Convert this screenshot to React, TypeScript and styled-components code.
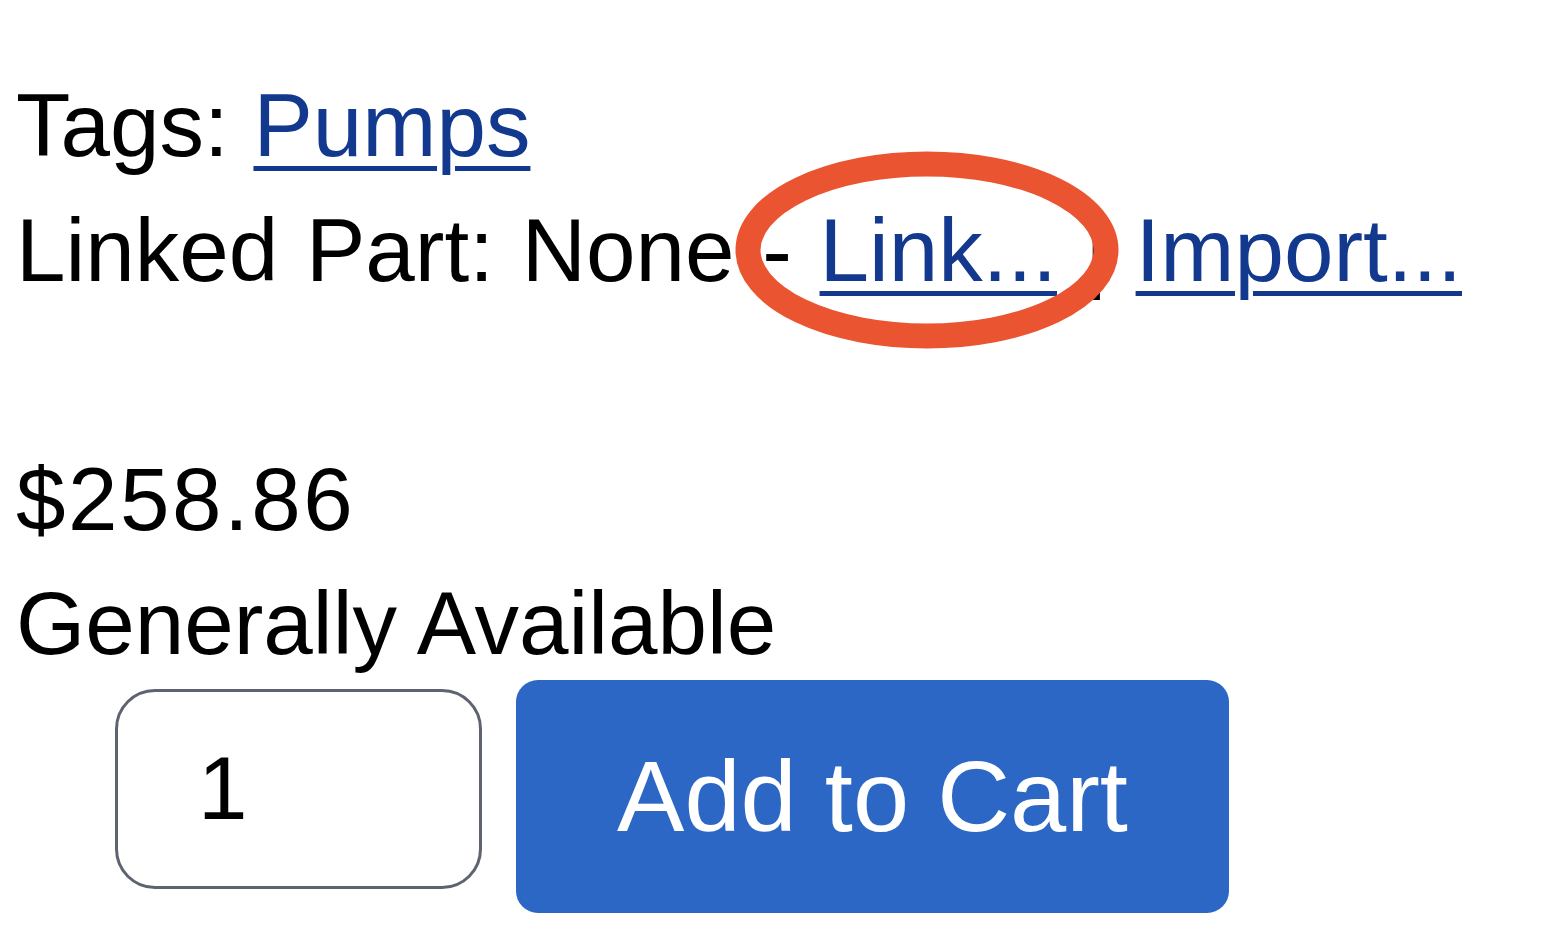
import styled, { createGlobalStyle } from 'styled-components';

const GlobalStyle = createGlobalStyle`
  html, body {
    margin: 0;
    padding: 0;
    background: #ffffff;
  }
  body {
    font-family: "Liberation Sans", Arial, Helvetica, sans-serif;
    color: #000000;
  }
`;

const Page = styled.div`
  padding: 63px 0 0 16px;
  font-size: 89px;
  line-height: 1.4;
`;

const Line = styled.div<{ $spaced?: boolean }>`
  white-space: nowrap;
  word-spacing: ${(p) => (p.$spaced ? '3px' : 'normal')};
`;

const Price = styled(Line)`
  margin-top: 124.6px;
  letter-spacing: 2.5px;
`;

const TextLink = styled.a`
  color: #12398e;
  text-decoration: underline;
  text-decoration-thickness: 5px;
  text-underline-offset: 10px;
  cursor: pointer;
`;

const Marked = styled.span`
  position: relative;
`;

// hand-drawn style annotation ring over the "Link..." action
const Ring = styled.svg`
  position: absolute;
  left: 50%;
  top: 50%;
  width: 390px;
  height: 204px;
  transform: translate(calc(-50% - 11px), -50%);
  pointer-events: none;
  z-index: 2;
`;

const CartRow = styled.div`
  display: flex;
  align-items: flex-start;
  gap: 34px;
  margin-top: -6px;
`;

const Qty = styled.input`
  box-sizing: border-box;
  width: 367px;
  height: 200px;
  margin: 9px 0 0 99px;
  padding: 0 0 0 80px;
  border: 3px solid #5e6370;
  border-radius: 40px;
  font-family: inherit;
  font-size: 89px;
  color: #000;
  background: #fff;
  outline: none;
`;

const AddButton = styled.button`
  width: 713px;
  height: 233px;
  border: none;
  border-radius: 22px;
  background: #2c67c5;
  color: #ffffff;
  font-family: inherit;
  font-size: 101px;
  cursor: pointer;
`;

export default function App() {
  return (
    <>
      <GlobalStyle />
      <Page>
        <Line>
          Tags: <TextLink>Pumps</TextLink>
        </Line>
        <Line $spaced>
          Linked Part: None -{' '}
          <Marked>
            <TextLink>Link...</TextLink>
            <Ring viewBox="0 0 390 204">
              <ellipse
                cx="195"
                cy="102"
                rx="179"
                ry="86"
                fill="none"
                stroke="#ea5430"
                strokeWidth="25"
              />
            </Ring>
          </Marked>{' '}
          | <TextLink>Import...</TextLink>
        </Line>
        <Price>$258.86</Price>
        <Line>Generally Available</Line>
        <CartRow>
          <Qty type="text" defaultValue="1" />
          <AddButton>Add to Cart</AddButton>
        </CartRow>
      </Page>
    </>
  );
}
